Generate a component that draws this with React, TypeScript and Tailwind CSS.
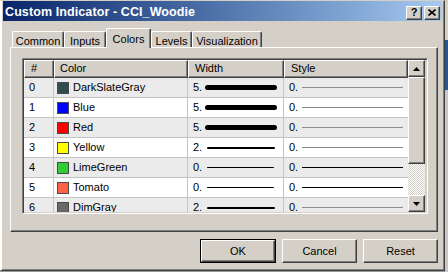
const ROWS = [
  { n: 0, name: "DarkSlateGray", swatch: "bg-[#2f4f4f]", width: "5.", line: "h-[5px] w-[72px] ml-[3px]", styleLine: "bg-[#8c8c8c]" },
  { n: 1, name: "Blue", swatch: "bg-[#0000ff]", width: "5.", line: "h-[5px] w-[72px] ml-[3px]", styleLine: "bg-[#8c8c8c]" },
  { n: 2, name: "Red", swatch: "bg-[#ff0000]", width: "5.", line: "h-[5px] w-[72px] ml-[3px]", styleLine: "bg-[#8c8c8c]" },
  { n: 3, name: "Yellow", swatch: "bg-[#ffff00]", width: "2.", line: "h-[2px] w-[68px] ml-[5px]", styleLine: "bg-[#8c8c8c]" },
  { n: 4, name: "LimeGreen", swatch: "bg-[#32cd32]", width: "0.", line: "h-px w-[67px] ml-[5px]", styleLine: "bg-black" },
  { n: 5, name: "Tomato", swatch: "bg-[#ff6347]", width: "0.", line: "h-px w-[67px] ml-[5px]", styleLine: "bg-black" },
  { n: 6, name: "DimGray", swatch: "bg-[#696969]", width: "2.", line: "h-[2px] w-[68px] ml-[5px]", styleLine: "bg-[#8c8c8c]" },
];

const TABS = [
  { label: "Common", w: "w-[52px]" },
  { label: "Inputs", w: "w-[42px]" },
  { label: "Colors", w: "w-[45px]", active: true },
  { label: "Levels", w: "w-[41px]" },
  { label: "Visualization", w: "w-[70px]" },
];

const raised =
  "border border-t-white border-l-white border-r-[#404040] border-b-[#404040] shadow-[inset_-1px_-1px_#808080]";

function Arrow({ up }: { up?: boolean }) {
  return (
    <div className={`w-[17px] h-[17px] shrink-0 bg-[#d4d0c8] flex items-center justify-center ${raised}`}>
      <svg width="7" height="4" viewBox="0 0 7 4">
        {up ? <path d="M3.5 0 L7 4 L0 4 Z" fill="#000" /> : <path d="M0 0 L7 0 L3.5 4 Z" fill="#000" />}
      </svg>
    </div>
  );
}

export default function App() {
  return (
    <div className="w-[448px] h-[272px] flex bg-[#9a9a9a] font-['Liberation_Sans',Arial,sans-serif] text-[11px] text-black overflow-hidden">
      {/* window */}
      <div className="w-[445px] h-[271px] shrink-0 flex flex-col bg-[#d4d0c8] border-t border-t-[#d4d0c8] border-l border-l-white border-r border-r-[#404040] border-b border-b-[#404040] shadow-[inset_1px_0_#ffffff,inset_-1px_-1px_#808080] pl-[2px] pr-[2px]">
        {/* title bar */}
        <div className="h-[20px] shrink-0 flex items-center bg-linear-to-r from-[#0a246a] to-[#a6caf0] pl-[2px] pr-[2px]">
          <span className="flex-1 text-white font-bold text-[12.5px] leading-none pt-[2px] tracking-[0.1px]">Custom Indicator - CCI_Woodie</span>
          <div className={`w-[16px] h-[14px] mt-[3px] bg-[#d4d0c8] flex items-center justify-center font-bold text-[11px] leading-none ${raised}`}>?</div>
          <div className={`w-[16px] h-[14px] mt-[3px] ml-[2px] bg-[#d4d0c8] flex items-center justify-center ${raised}`}>
            <svg width="8" height="7" viewBox="0 0 8 7">
              <path d="M0.5 0.5 L7.5 6.5 M7.5 0.5 L0.5 6.5" stroke="#000" strokeWidth="1.6" />
            </svg>
          </div>
        </div>

        {/* tabs */}
        <div className="flex items-end h-[26px] shrink-0 pl-[9px]">
          {TABS.map((t) =>
            t.active ? (
              <div
                key={t.label}
                className={`${t.w} h-[20px] -mb-px relative z-10 bg-[#d4d0c8] border-t border-l border-t-white border-l-white border-r border-r-[#404040] shadow-[inset_-1px_0_#808080] rounded-t-[2px] flex justify-center pt-[2px]`}
              >
                {t.label}
              </div>
            ) : (
              <div
                key={t.label}
                className={`${t.w} h-[16px] bg-[#d4d0c8] border-t border-l border-t-white border-l-white border-r border-r-[#404040] shadow-[inset_-1px_0_#808080] rounded-t-[2px] flex justify-center pt-[1px]`}
              >
                {t.label}
              </div>
            )
          )}
        </div>

        {/* panel */}
        <div className={`ml-[7px] w-[428px] h-[185px] shrink-0 flex flex-col pl-[11px] pr-[9px] pt-[10px] ${raised}`}>
          <div className="w-[406px] h-[156px] flex border border-t-[#808080] border-l-[#808080] border-r-white border-b-white shadow-[inset_1px_1px_#404040,inset_-1px_-1px_#d4d0c8] p-px">
            {/* rows */}
            <div className="w-[384px] h-full flex flex-col overflow-hidden bg-white">
              <div className="h-[18px] shrink-0 flex bg-[#d4d0c8]">
                <div className={`w-[30px] ${raised} flex items-center pl-[6px] pb-px`}>#</div>
                <div className={`w-[134px] ${raised} flex items-center pl-[5px] pb-px`}>Color</div>
                <div className={`w-[96px] ${raised} flex items-center pl-[6px] pb-px`}>Width</div>
                <div className={`flex-1 ${raised} flex items-center pl-[6px] pb-px`}>Style</div>
              </div>
              {ROWS.map((r) => (
                <div
                  key={r.n}
                  className={`h-[20px] shrink-0 flex border-b border-[#c4c4c4] ${r.n % 2 === 0 ? "bg-[#ebebeb]" : "bg-white"}`}
                >
                  <div className="w-[30px] border-r border-[#c4c4c4] flex items-center pl-[5px]">{r.n}</div>
                  <div className="w-[134px] border-r border-[#c4c4c4] flex items-center pl-[3px]">
                    <span className={`w-[12px] h-[12px] border border-[#4a4a4a] ${r.swatch}`} />
                    <span className="ml-[4px]">{r.name}</span>
                  </div>
                  <div className="w-[96px] border-r border-[#c4c4c4] flex items-center pl-[5px]">
                    <span>{r.width}</span>
                    <span className={`${r.line} bg-black rounded-full`} />
                  </div>
                  <div className="flex-1 flex items-center pl-[5px]">
                    <span>0.</span>
                    <span className={`h-px w-[101px] ml-[4px] ${r.styleLine}`} />
                  </div>
                </div>
              ))}
            </div>
            {/* scrollbar */}
            <div className="w-[17px] h-full flex flex-col">
              <Arrow up />
              <div className={`h-[87px] shrink-0 bg-[#d4d0c8] ${raised}`} />
              <div className="flex-1 bg-[repeating-conic-gradient(#ffffff_0%_25%,#d4d0c8_0%_50%)] bg-[length:2px_2px]" />
              <Arrow />
            </div>
          </div>
        </div>

        {/* buttons */}
        <div className="flex justify-end gap-[6px] pr-[4px] pt-[7px]">
          <div className="w-[76px] h-[24px] border border-black flex">
            <div className={`flex-1 ${raised} flex items-center justify-center`}>OK</div>
          </div>
          <div className={`w-[75px] h-[24px] ${raised} flex items-center justify-center`}>Cancel</div>
          <div className={`w-[75px] h-[24px] ${raised} flex items-center justify-center`}>Reset</div>
        </div>
      </div>
      <div className="flex-1 flex flex-col">
        <div className="h-[40px] bg-[#d4d0c8]" />
        <div className="h-[50px] bg-[#1f5a9c]" />
        <div className="flex-1 bg-[#c8c8c8]" />
      </div>
    </div>
  );
}
